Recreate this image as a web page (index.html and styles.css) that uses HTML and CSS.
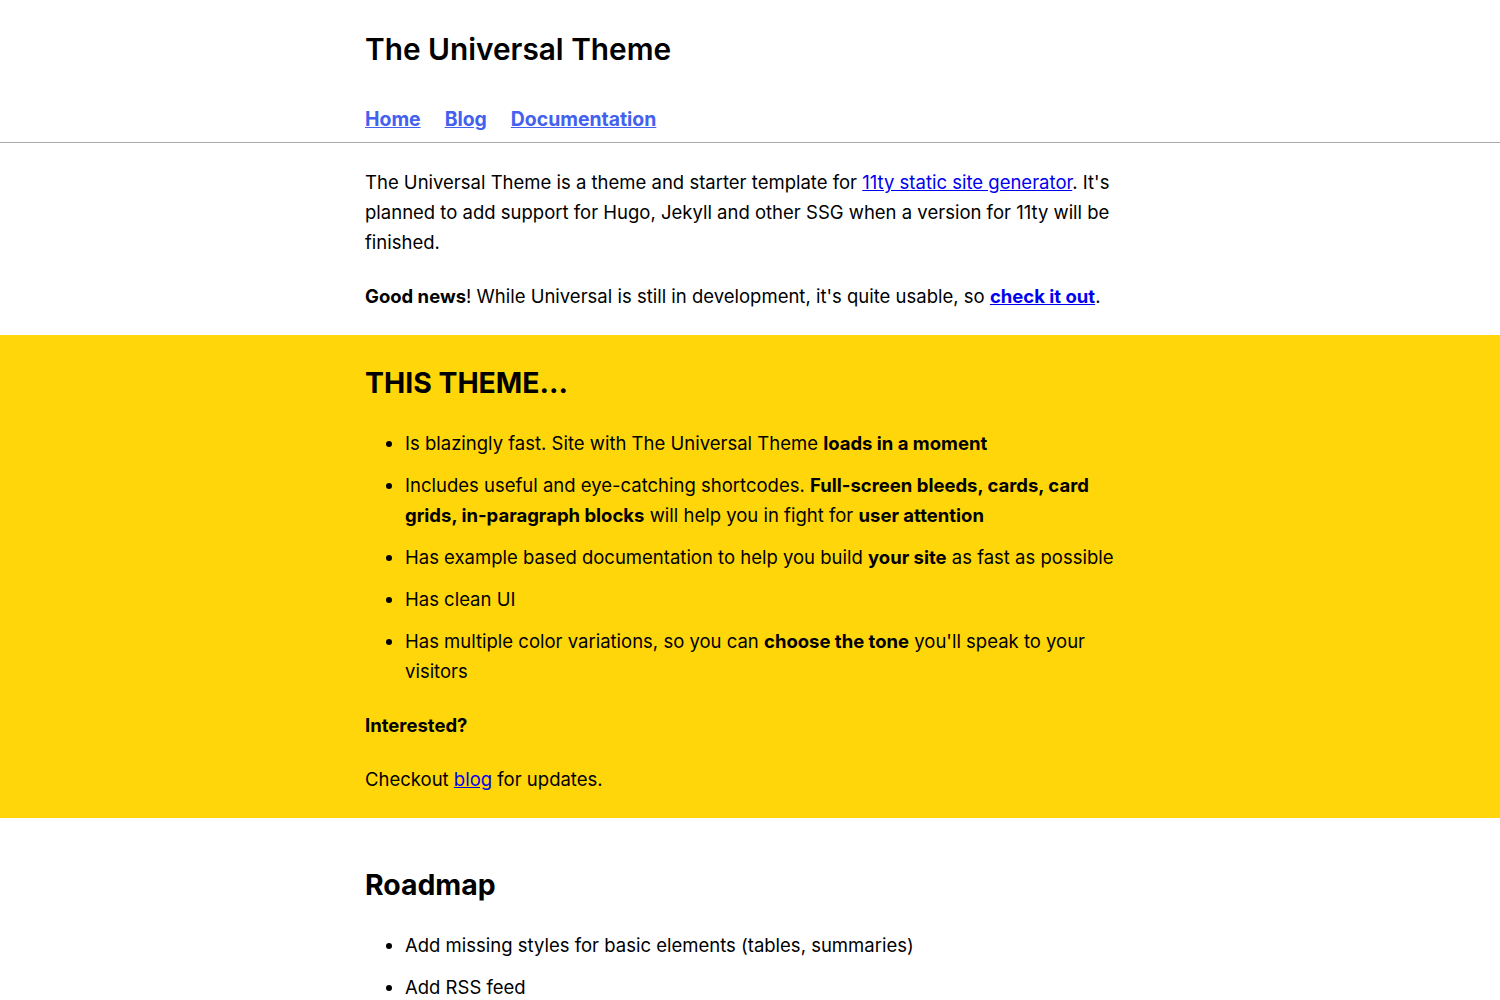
FILE: index.html
```html
<!DOCTYPE html>
<html lang="en">
<head>
<meta charset="utf-8">
<title>The Universal Theme</title>
<link rel="stylesheet" href="styles.css">
</head>
<body>
<header class="site-header">
  <div class="container">
    <h1 class="site-title">The Universal Theme</h1>
    <nav class="nav">
      <a href="#">Home</a>
      <a href="#">Blog</a>
      <a href="#">Documentation</a>
    </nav>
  </div>
</header>
<main>
  <section class="container intro">
    <p>The Universal Theme is a theme and starter template for <a href="#">11ty static site generator</a>. It's planned to add support for Hugo, Jekyll and other SSG when a version for 11ty will be finished.</p>
    <p><strong>Good news</strong>! While Universal is still in development, it's quite usable, so <a href="#"><strong>check it out</strong></a>.</p>
  </section>
  <section class="bleed">
    <div class="container">
      <h2 class="caps">THIS THEME...</h2>
      <ul>
        <li>Is blazingly fast. Site with The Universal Theme <strong>loads in a moment</strong></li>
        <li>Includes useful and eye-catching shortcodes. <strong>Full-screen bleeds, cards, card grids, in-paragraph blocks</strong> will help you in fight for <strong>user attention</strong></li>
        <li>Has example based documentation to help you build <strong>your site</strong> as fast as possible</li>
        <li>Has clean UI</li>
        <li>Has multiple color variations, so you can <strong>choose the tone</strong> you'll speak to your visitors</li>
      </ul>
      <p><strong>Interested?</strong></p>
      <p class="last">Checkout <a href="#">blog</a> for updates.</p>
    </div>
  </section>
  <section class="container roadmap">
    <h2>Roadmap</h2>
    <ul>
      <li>Add missing styles for basic elements (tables, summaries)</li>
      <li>Add RSS feed</li>
      <li>Add search</li>
    </ul>
  </section>
</main>
</body>
</html>
```
FILE: styles.css
```css
* { box-sizing: border-box; }
html, body { margin: 0; padding: 0; }
body {
  font-family: Inter, "Noto Sans", sans-serif;
  font-size: 18.5px;
  line-height: 30px;
  color: #000;
  background: #fff;
}
.container {
  width: 770px;
  margin: 0 auto;
}
.site-header {
  border-bottom: 1px solid #a8a8a8;
}
.site-title {
  margin: 0;
  padding-top: 30px;
  font-size: 29.8px;
  line-height: 38px;
  font-weight: 600;
}
.nav {
  display: flex;
  gap: 24px;
  padding-top: 36px;
  padding-bottom: 8px;
}
.nav a {
  color: #4361ee;
  font-weight: 700;
  font-size: 19.4px;
  line-height: 30px;
}
a { color: #0000ee; }
p { margin: 0 0 24px; }
.intro { padding-top: 24px; padding-bottom: 24px; }
.intro p:last-child { margin-bottom: 0; }
.bleed {
  background: #ffd60a;
  padding: 30px 0 24px;
}
.bleed p.last { margin-bottom: 0; }
h2 {
  margin: 0 0 27px;
  font-size: 28.4px;
  line-height: 36px;
  font-weight: 700;
}
ul {
  margin: 0 0 24px;
  padding-left: 40px;
}
li { margin-bottom: 12px; }
li:last-child { margin-bottom: 0; }
.roadmap { padding-top: 49px; }
```
